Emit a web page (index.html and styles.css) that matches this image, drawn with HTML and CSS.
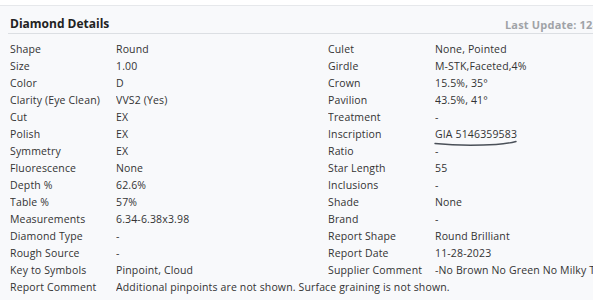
FILE: index.html
```html
<!DOCTYPE html>
<html>
<head>
<meta charset="utf-8">
<link rel="stylesheet" href="styles.css">
</head>
<body>
<div class="topband"></div>
<section class="panel">
  <header class="head">
    <h2 class="title">Diamond Details</h2>
    <span class="updated">Last Update: 12-28-2023</span>
  </header>
  <div class="grid">
    <div class="k">Shape</div><div class="v">Round</div><div class="k">Culet</div><div class="v">None, Pointed</div>
    <div class="k">Size</div><div class="v">1.00</div><div class="k">Girdle</div><div class="v">M-STK,Faceted,4%</div>
    <div class="k">Color</div><div class="v">D</div><div class="k">Crown</div><div class="v">15.5%, 35°</div>
    <div class="k">Clarity (Eye Clean)</div><div class="v">VVS2 (Yes)</div><div class="k">Pavilion</div><div class="v">43.5%, 41°</div>
    <div class="k">Cut</div><div class="v">EX</div><div class="k">Treatment</div><div class="v">-</div>
    <div class="k">Polish</div><div class="v">EX</div><div class="k">Inscription</div><div class="v mark">GIA 5146359583<svg class="scribble" width="84" height="8" viewBox="0 0 84 8"><path d="M1 4.5 C 20 6.5, 45 6.5, 62 5.5 C 70 5, 76 4, 82 2.5" fill="none" stroke="#4a5058" stroke-width="1.4" stroke-linecap="round"/></svg></div>
    <div class="k">Symmetry</div><div class="v">EX</div><div class="k">Ratio</div><div class="v">-</div>
    <div class="k">Fluorescence</div><div class="v">None</div><div class="k">Star Length</div><div class="v">55</div>
    <div class="k">Depth %</div><div class="v">62.6%</div><div class="k">Inclusions</div><div class="v">-</div>
    <div class="k">Table %</div><div class="v">57%</div><div class="k">Shade</div><div class="v">None</div>
    <div class="k">Measurements</div><div class="v">6.34-6.38x3.98</div><div class="k">Brand</div><div class="v">-</div>
    <div class="k">Diamond Type</div><div class="v">-</div><div class="k">Report Shape</div><div class="v">Round Brilliant</div>
    <div class="k">Rough Source</div><div class="v">-</div><div class="k">Report Date</div><div class="v">11-28-2023</div>
    <div class="k">Key to Symbols</div><div class="v">Pinpoint, Cloud</div><div class="k">Supplier Comment</div><div class="v">-No Brown No Green No Milky Type IIa</div>
    <div class="k">Report Comment</div><div class="v wide">Additional pinpoints are not shown. Surface graining is not shown.</div>
  </div>
</section>
</body>
</html>
```

FILE: styles.css
```css
html, body {
  margin: 0;
  padding: 0;
  width: 593px;
  height: 300px;
  overflow: hidden;
  background: #f8f9fb;
  font-family: "Open Sans", "Noto Sans", sans-serif;
  color: #333;
}
.topband {
  height: 5px;
  background: #ffffff;
  border-bottom: 1px solid #e6e8eb;
}
.panel {
  padding: 0 0 0 8px;
}
.head {
  display: flex;
  justify-content: space-between;
  align-items: center;
  height: 27px;
  border-bottom: 1px solid #dcdfe3;
  white-space: nowrap;
  overflow: hidden;
}
.title {
  margin: 0 0 0 2px;
  font-size: 12px;
  font-weight: 700;
  color: #222;
  padding-top: 8px;
}
.updated {
  font-size: 11px;
  font-weight: 700;
  color: #a0a3a7;
  letter-spacing: 0.2px;
  margin-right: -46px;
  padding-top: 9px;
}
.grid {
  display: grid;
  grid-template-columns: 106px 212px 107px 1fr;
  grid-auto-rows: 17px;
  padding: 7px 0 0 2px;
  font-size: 10.5px;
  line-height: 17px;
  letter-spacing: 0.15px;
}
.k, .v {
  white-space: nowrap;
  overflow: hidden;
}
.v.wide {
  grid-column: 2 / 5;
}
.mark {
  position: relative;
  overflow: visible;
}
.scribble {
  position: absolute;
  left: -1px;
  top: 13px;
}
```
